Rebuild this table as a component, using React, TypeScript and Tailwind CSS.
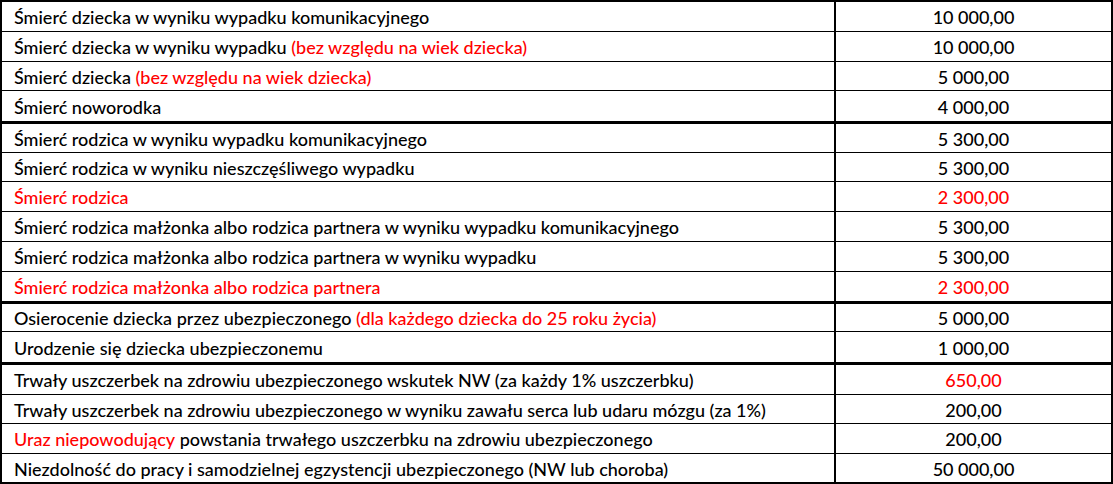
type Part = { text: string; red?: boolean };

interface Row {
  label: Part[];
  amount: string;
  amountRed?: boolean;
  h: number;
  thick?: boolean;
}

// h = content height of the row, the bottom rule is added on top of it
const rows: Row[] = [
  { label: [{ text: 'Śmierć dziecka w wyniku wypadku komunikacyjnego' }], amount: '10 000,00', h: 29 },
  {
    label: [{ text: 'Śmierć dziecka w wyniku wypadku ' }, { text: '(bez względu na wiek dziecka)', red: true }],
    amount: '10 000,00',
    h: 29,
  },
  {
    label: [{ text: 'Śmierć dziecka ' }, { text: '(bez względu na wiek dziecka)', red: true }],
    amount: '5 000,00',
    h: 28,
  },
  { label: [{ text: 'Śmierć noworodka' }], amount: '4 000,00', h: 30, thick: true },
  { label: [{ text: 'Śmierć rodzica w wyniku wypadku komunikacyjnego' }], amount: '5 300,00', h: 28 },
  { label: [{ text: 'Śmierć rodzica w wyniku nieszczęśliwego wypadku' }], amount: '5 300,00', h: 28 },
  { label: [{ text: 'Śmierć rodzica', red: true }], amount: '2 300,00', amountRed: true, h: 29 },
  {
    label: [{ text: 'Śmierć rodzica małżonka albo rodzica partnera w wyniku wypadku komunikacyjnego' }],
    amount: '5 300,00',
    h: 29,
  },
  { label: [{ text: 'Śmierć rodzica małżonka albo rodzica partnera w wyniku wypadku' }], amount: '5 300,00', h: 29 },
  {
    label: [{ text: 'Śmierć rodzica małżonka albo rodzica partnera', red: true }],
    amount: '2 300,00',
    amountRed: true,
    h: 29,
    thick: true,
  },
  {
    label: [
      { text: 'Osierocenie dziecka przez ubezpieczonego ' },
      { text: '(dla każdego dziecka do 25 roku życia)', red: true },
    ],
    amount: '5 000,00',
    h: 27,
  },
  { label: [{ text: 'Urodzenie się dziecka ubezpieczonemu' }], amount: '1 000,00', h: 30, thick: true },
  {
    label: [{ text: 'Trwały uszczerbek na zdrowiu ubezpieczonego wskutek NW (za każdy 1% uszczerbku)' }],
    amount: '650,00',
    amountRed: true,
    h: 29,
  },
  {
    label: [
      { text: 'Trwały uszczerbek na zdrowiu ubezpieczonego w wyniku zawału serca lub udaru mózgu (za 1%)' },
    ],
    amount: '200,00',
    h: 28,
  },
  {
    label: [
      { text: 'Uraz niepowodujący', red: true },
      { text: ' powstania trwałego uszczerbku na zdrowiu ubezpieczonego' },
    ],
    amount: '200,00',
    h: 29,
  },
  {
    label: [{ text: 'Niezdolność do pracy i samodzielnej egzystencji ubezpieczonego (NW lub choroba)' }],
    amount: '50 000,00',
    h: 28,
  },
];

export default function App() {
  return (
    <div className="w-[1113px] h-[484px] bg-white">
      <div
        className="border-2 border-black text-[18px] font-medium text-black"
        style={{ fontFamily: 'Lato, "Liberation Sans", sans-serif' }}
      >
        {rows.map((row, i) => {
          const last = i === rows.length - 1;
          const rule = last ? 0 : row.thick ? 3 : 1;
          const border = last ? '' : row.thick ? 'border-b-[3px] border-black' : 'border-b border-black';
          return (
            <div key={i} className={`flex ${border}`} style={{ height: row.h + rule }}>
              <div className="w-[834px] flex items-center pt-[2px] pl-[12px] border-r-2 border-black whitespace-pre">
                {row.label.map((p, j) => (
                  <span key={j} className={p.red ? 'text-[#ff0000]' : ''}>
                    {p.text}
                  </span>
                ))}
              </div>
              <div
                className={`flex-1 flex items-center justify-center pt-[2px] ${row.amountRed ? 'text-[#ff0000]' : ''}`}
              >
                {row.amount}
              </div>
            </div>
          );
        })}
      </div>
    </div>
  );
}
